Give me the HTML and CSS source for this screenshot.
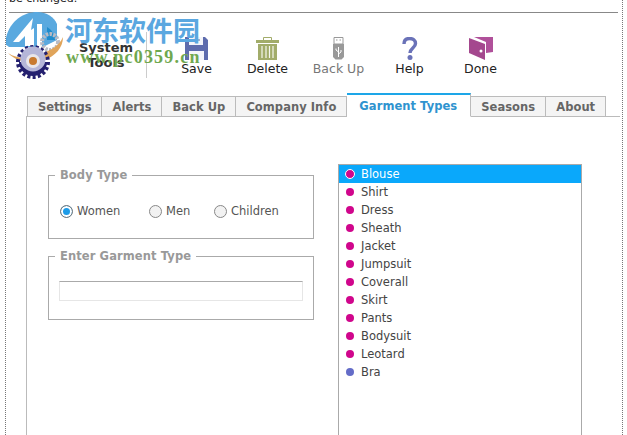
FILE: index.html
```html
<!DOCTYPE html>
<html lang="en">
<head>
<meta charset="utf-8">
<title>System Tools</title>
<link rel="stylesheet" href="styles.css">
</head>
<body>
<div class="page">
  <p class="note">be changed.</p>
  <header class="toolbar">
    <div class="brand">
      <svg class="logo" viewBox="0 0 60 72" width="60" height="72" aria-hidden="true">
        <path d="M0 34C2 12 18 2 32 2C42 2 49 7 52 14L52 30L38 37H4Z" fill="#5aa9df"/>
        <path d="M8 32L28 8L26 20L29 18V36H20V26L14 32Z" fill="#fff"/>
        <path d="M32 14H37V38H32Z" fill="#fff"/>
        <path d="M42 17C47 20 50 25 50 30H42Z" fill="#1f8ccd"/>
        <circle cx="45" cy="32" r="8" fill="none" stroke="#b9bbc4" stroke-width="4" stroke-dasharray="2.500 1.200"/>
        <path d="M3 43C14 50 24 48 36 44C46 40 54 36 58 27C58 38 50 46 40 50C26 55 12 52 3 43Z" fill="#e0a45a"/>
        <circle cx="28" cy="52" r="15" fill="none" stroke="#24206f" stroke-width="4" stroke-dasharray="3 2.200"/>
        <path d="M14 52A14 14 0 0 0 42 52Z" fill="#24206f"/>
        <circle cx="28" cy="49" r="12.500" fill="#b5b6d8"/>
        <circle cx="28" cy="51" r="7" fill="#e9e6ea"/>
        <circle cx="28" cy="51" r="4" fill="#c87a30"/>
      </svg>
      <span class="brand-name">System<br>Tools</span>
    </div>
    <span class="divider"></span>
    <nav class="actions">
      <div class="action">
        <svg viewBox="0 0 23 23" width="23" height="23" aria-hidden="true"><path d="M0 0H20L23 3V23H0Z" fill="#5e6cad"/><path d="M4 0H18V8H4Z" fill="#f4f5fa"/><path d="M7 3H15" stroke="#5e6cad"/><path d="M4 14H19V23H4Z" fill="#f4f5fa"/></svg>
        <span>Save</span>
      </div>
      <div class="action">
        <svg viewBox="0 0 23 23" width="23" height="23" aria-hidden="true"><path d="M7.500 3V.5H15.500V3" fill="none" stroke="#a2ac6a"/><path d="M0 3H23V6H0Z" fill="#a2ac6a"/><path d="M2 7H21V23H2Z" fill="#a2ac6a"/><path d="M6 9V21M10 9V21M13.500 9V21M17 9V21" stroke="#f6f7ee" stroke-width="1.200"/></svg>
        <span>Delete</span>
      </div>
      <div class="action backup">
        <svg viewBox="0 0 23 23" width="23" height="23" aria-hidden="true"><path d="M7 .5H16V7H7Z" fill="none" stroke="#999"/><path d="M9 3H10.500M12.500 3H14" stroke="#999"/><path d="M6 7H17V20L14.500 22.500H8.500L6 20Z" fill="#999"/><path d="M11.500 10V20M11.500 15L9 13V11.500M11.500 17L14 15V13" stroke="#fff" fill="none"/></svg>
        <span>Back Up</span>
      </div>
      <div class="action">
        <svg viewBox="0 0 23 23" width="23" height="23" aria-hidden="true"><path d="M6 7C6 3 8.500 1.500 11.500 1.500C15 1.500 17.500 3.500 17.500 6.500C17.500 11 12 11 12 16" fill="none" stroke="#6a72b8" stroke-width="3.400"/><circle cx="12" cy="20.500" r="2.500" fill="#6a72b8"/></svg>
        <span>Help</span>
      </div>
      <div class="action">
        <svg viewBox="0 0 24 23" width="24" height="23" aria-hidden="true"><path d="M5 0H24V15L17 16V5Z" fill="#b0509a"/><path d="M0 1L16 7V23L0 16Z" fill="#a4488e"/><circle cx="12" cy="14" r="1.500" fill="#fff"/></svg>
        <span>Done</span>
      </div>
    </nav>
  </header>
  <div class="watermark">
    <span class="wm-cn">河东软件园</span>
    <span class="wm-url">www.pc0359.cn</span>
  </div>
  <div class="tabs">
    <span class="tab">Settings</span>
    <span class="tab">Alerts</span>
    <span class="tab">Back Up</span>
    <span class="tab">Company Info</span>
    <span class="tab active">Garment Types</span>
    <span class="tab">Seasons</span>
    <span class="tab">About</span>
  </div>
  <main class="panel">
    <div class="left">
      <fieldset class="group body-type">
        <legend>Body Type</legend>
        <label class="radio"><span class="dot on"></span>Women</label>
        <label class="radio"><span class="dot"></span>Men</label>
        <label class="radio"><span class="dot"></span>Children</label>
      </fieldset>
      <fieldset class="group garment">
        <legend>Enter Garment Type</legend>
        <input class="field" type="text" aria-label="Enter Garment Type">
      </fieldset>
    </div>
    <ul class="list">
      <li class="selected"><i class="bullet ring"></i>Blouse</li>
      <li><i class="bullet"></i>Shirt</li>
      <li><i class="bullet"></i>Dress</li>
      <li><i class="bullet"></i>Sheath</li>
      <li><i class="bullet"></i>Jacket</li>
      <li><i class="bullet"></i>Jumpsuit</li>
      <li><i class="bullet"></i>Coverall</li>
      <li><i class="bullet"></i>Skirt</li>
      <li><i class="bullet"></i>Pants</li>
      <li><i class="bullet"></i>Bodysuit</li>
      <li><i class="bullet"></i>Leotard</li>
      <li><i class="bullet alt"></i>Bra</li>
    </ul>
  </main>
</div>
</body>
</html>
```

FILE: styles.css
```css
* { box-sizing: border-box; }
html, body { margin: 0; height: 435px; overflow: hidden; background: #fff; }
body { font-family: "DejaVu Sans", Verdana, sans-serif; font-size: 11px; color: #333; }
.page {
  position: relative;
  margin-left: 5px;
  width: 618px;
  height: 435px;
  border-left: 1px dotted #777;
  border-right: 1px dotted #777;
  padding: 0 0 0 3px;
  overflow: hidden;
}
.note {
  margin: -8px 0 0;
  line-height: 14px;
  font-size: 11px;
  color: #222;
  border-bottom: 1px solid #888;
  width: 609px;
  height: 21px;
}
.toolbar { display: flex; height: 75px; }
.brand { position: relative; width: 137px; height: 70px; }
.logo { position: absolute; left: -4px; top: -3px; }
.brand-name {
  position: absolute;
  left: 67px;
  top: 27px;
  width: 60px;
  text-align: center;
  font-weight: bold;
  font-size: 13px;
  line-height: 15px;
  color: #333;
}
.divider { width: 1px; height: 46px; margin-top: 19px; background: #ccc; }
.actions { display: flex; margin-left: 14px; padding-top: 24px; }
.action {
  width: 71px;
  display: flex;
  flex-direction: column;
  align-items: center;
  font-size: 12.500px;
  color: #222;
  gap: 1px;
}
.action.backup { color: #777; }
.watermark {
  position: absolute;
  left: 0;
  top: 0;
  pointer-events: none;
}
.wm-cn {
  position: absolute;
  left: 59px;
  top: 13px;
  font-family: "Noto Sans CJK SC", sans-serif;
  font-weight: 700;
  font-size: 27px;
  line-height: 34px;
  white-space: nowrap;
  color: #5aa7e0;
}
.wm-url {
  position: absolute;
  left: 60px;
  top: 47px;
  font-family: "Liberation Serif", serif;
  font-weight: 700;
  font-size: 18px;
  letter-spacing: 1.200px;
  white-space: nowrap;
  color: #6fa84f;
}
.tabs { display: flex; align-items: flex-end; padding-left: 18px; height: 29px; }
.tab {
  height: 21px;
  padding: 1px 10px 0;
  display: flex;
  align-items: center;
  background: #f4f4f4;
  border: 1px solid #bbb;
  border-left: 0;
  font-weight: bold;
  font-size: 11.500px;
  letter-spacing: .05px;
  color: #666;
}
.tab:first-child { border-left: 1px solid #bbb; letter-spacing: -.1px; }
.tab.active {
  position: relative;
  z-index: 1;
  height: 24px;
  padding: 0 13px 0 12px;
  background: #fff;
  color: #2f93cf;
  border-top: 2px solid #1da6e8;
  border-bottom-color: #fff;
}
.panel {
  display: flex;
  margin-left: 17px;
  width: 594px;
  height: 330px;
  border-left: 1px solid #bbb;
  border-top: 1px solid #bbb;
  margin-top: -1px;
  padding: 47px 0 0 21px;
  gap: 24px;
}
.left { width: 266px; padding-top: 4px; display: flex; flex-direction: column; gap: 10px; flex: none; }
.group {
  margin: 0;
  padding: 0;
  border: 1px solid #aaa;
  width: 266px;
}
.group legend {
  padding: 0 5px;
  font-weight: bold;
  font-size: 11.500px;
  letter-spacing: .1px;
  line-height: 14px;
  color: #999;
}
.body-type { height: 71px; display: flex; padding: 21px 0 0 11px; }
.body-type legend { margin-left: -5px; }
.radio { display: flex; align-items: center; height: 16px; color: #555; font-size: 11.500px; }
.radio:nth-of-type(1) { width: 89px; }
.radio:nth-of-type(2) { width: 65px; }
.dot {
  width: 13px;
  height: 13px;
  border-radius: 50%;
  border: 1px solid #888;
  background: #f2f2f2;
  margin-right: 4px;
}
.dot.on { border-color: #777; background: #1d9be8; box-shadow: inset 0 0 0 2px #fff; }
.garment { height: 71px; padding: 18px 10px 0; }
.garment legend { margin-left: -4px; }
.field {
  display: block;
  width: 244px;
  height: 20px;
  border: 1px solid #e6e6e6;
  border-top-color: #aaa;
  background: #fff;
  outline: 0;
}
.list {
  list-style: none;
  margin: 0;
  padding: 0;
  width: 244px;
  height: 300px;
  flex: none;
  border: 1px solid #aaa;
  border-bottom: 0;
}
.list li {
  display: flex;
  align-items: center;
  height: 18px;
  padding-left: 7px;
  font-size: 11.500px;
  color: #444;
}
.list .selected { background: #0aa8fb; color: #fff; }
.bullet { width: 8px; height: 8px; border-radius: 50%; background: #d0068c; margin-right: 7px; flex: none; }
.bullet.ring { width: 10px; height: 10px; margin: 0 6px 0 -1px; border: 1px solid #fff; }
.bullet.alt { background: #646cc8; }
```
